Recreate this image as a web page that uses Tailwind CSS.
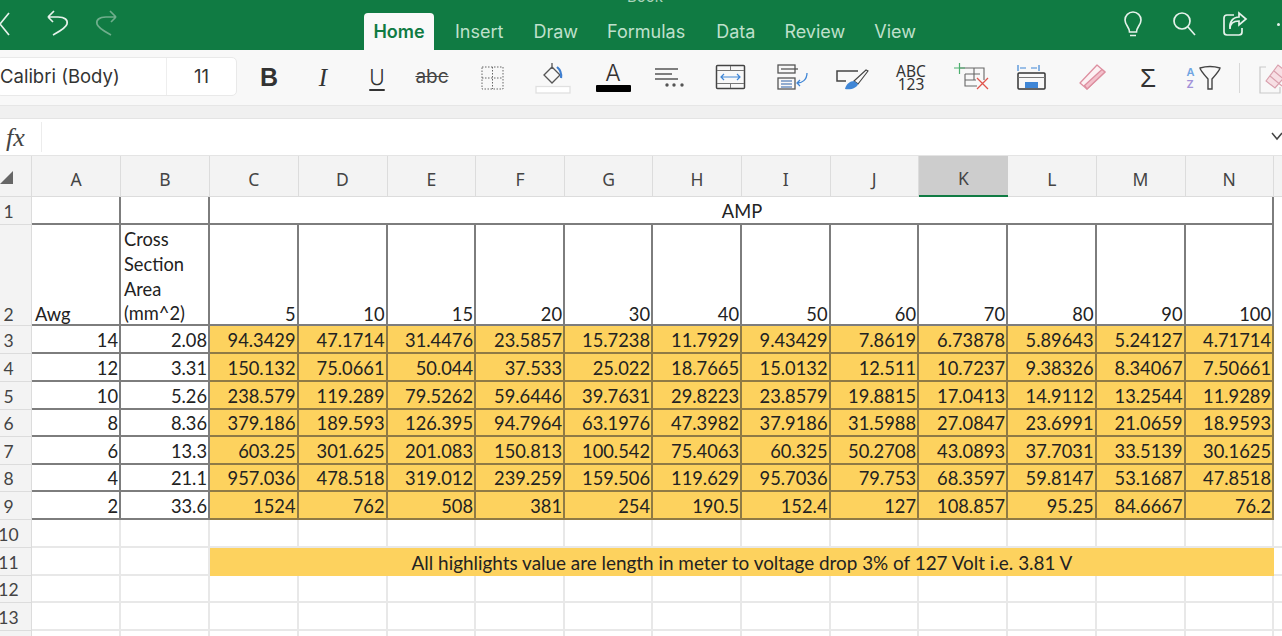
<!DOCTYPE html>
<html lang="en">
<head>
<meta charset="UTF-8">
<title>Book</title>
<script src="https://cdn.jsdelivr.net/npm/@tailwindcss/browser@4"></script>
</head>
<body class="w-[1282px] h-[636px] overflow-hidden bg-white font-['Inter',sans-serif]">

<!-- title bar + tabs -->
<div class="relative h-[50px] bg-[#107b43] flex items-end overflow-hidden">
  <span class="absolute left-[627px] top-[-14px] text-[15px] text-[#a9d3bb]">Book</span>
  <div class="absolute left-0 top-[10px] flex items-start">
    <svg class="ml-[-3px] w-[14px] h-[26px]" viewBox="0 0 14 26" fill="none" stroke="#e6f2eb" stroke-width="1.7"><path d="M12 3 L3 14 L12 25"/></svg>
    <svg class="ml-[35px] w-[23px] h-[26px]" viewBox="0 0 23 26" fill="none" stroke="#e6f2eb" stroke-width="1.7"><path d="M2 7 L7 12 M2 7 L8 1 M2 7 H12 C19 7 22 10 21 14 C20 18 14 21 7 25"/></svg>
    <svg class="ml-[26px] w-[23px] h-[26px]" viewBox="0 0 23 26" fill="none" stroke="#6fae8c" stroke-width="1.7"><path d="M21 7 L16 12 M21 7 L15 1 M21 7 H11 C4 7 1 10 2 14 C3 18 9 21 16 25"/></svg>
  </div>
  <div class="flex items-end ml-[364px] h-full text-[18px] text-[#bfe0cc]">
    <div class="w-[70px] h-[37px] rounded-t-[4px] bg-[#f9f9f9] text-[#107b43] font-semibold flex items-center justify-center">Home</div>
    <div class="h-[37px] flex items-center ml-[21px]">Insert</div>
    <div class="h-[37px] flex items-center ml-[30px]">Draw</div>
    <div class="h-[37px] flex items-center ml-[29px]">Formulas</div>
    <div class="h-[37px] flex items-center ml-[31px]">Data</div>
    <div class="h-[37px] flex items-center ml-[29px]">Review</div>
    <div class="h-[37px] flex items-center ml-[29px]">View</div>
  </div>
  <div class="absolute left-[1120px] top-[10px] flex items-center">
    <svg class="ml-[2px] w-[22px] h-[28px]" viewBox="0 0 22 28" fill="none" stroke="#e6f2eb" stroke-width="1.6"><path d="M7.5 22 C7.5 17 3 15 3 10 A8 8 0 0 1 19 10 C19 15 14.5 17 14.5 22 Z M8 25.5 H14"/></svg>
    <svg class="ml-[27px] w-[26px] h-[26px]" viewBox="0 0 26 26" fill="none" stroke="#e6f2eb" stroke-width="1.7"><circle cx="11" cy="10" r="8"/><path d="M17 16 L24 24"/></svg>
    <svg class="ml-[25px] w-[26px] h-[26px]" viewBox="0 0 26 26" fill="none" stroke="#e6f2eb" stroke-width="1.7"><path d="M12 4 H5 Q2 4 2 7 V21 Q2 24 5 24 H17 Q20 24 20 21 V17"/><path d="M8 18 C8 12 12 10 17 10 V14 L24 8 L17 2 V6 C11 6 7 11 8 18 Z"/></svg>
    <span class="ml-[29px] w-[3px] h-[3px] rounded-full bg-[#e6f2eb]"></span>
  </div>
</div>

<!-- ribbon -->
<div class="h-[56px] bg-[#f8f8f8] border-b border-[#e6e6e6] flex items-center overflow-hidden text-[#333] [&>*]:shrink-0">
  <div class="ml-[-4px] mt-[-2px] w-[241px] h-[39px] rounded-[5px] bg-white border border-[#e9e9e9] flex items-center text-[18.5px]">
    <span class="w-[170px] pl-[3px] border-r border-[#eeeeee] h-full flex items-center">Calibri (Body)</span>
    <span class="flex-1 text-center">11</span>
  </div>
  <div class="ml-[12px] w-10 text-center font-['Liberation_Sans',sans-serif] font-bold text-[25px]">B</div>
  <div class="ml-[14px] w-10 text-center font-['Liberation_Serif',serif] italic text-[25px]">I</div>
  <div class="ml-[14px] w-10 text-center text-[21px] font-light underline underline-offset-4">U</div>
  <div class="ml-[15px] w-10 text-center text-[19px] line-through text-[#444]">abc</div>
  <svg class="ml-[19px] w-10 h-[36px]" viewBox="0 0 40 36" fill="none" stroke="#666" stroke-width="1" stroke-dasharray="1.5 1.5"><rect x="11" y="7" width="21" height="22"/><path d="M21.5 7 V29 M11 18 H32"/></svg>
  <svg class="ml-[20px] w-10 h-[36px]" viewBox="0 0 40 36" fill="none" stroke-width="1.3"><path d="M21 3 V9 M13 15 L21 7 L29 15 L21 23 Z" stroke="#555"/><path d="M26 7 Q31 11 30 18" stroke="#3f7fd0" stroke-width="2.2"/><rect x="5" y="26.5" width="34" height="6.5" fill="#fff" stroke="#e0e0e0"/></svg>
  <div class="ml-[22px] mt-[-2px] w-10 flex flex-col items-center text-[23px] leading-[24px] font-light">A<span class="w-[35px] h-[7px] rounded-[1px] bg-black"></span></div>
  <svg class="ml-[15px] w-10 h-[36px]" viewBox="0 0 40 36" fill="none" stroke="#555" stroke-width="1.5"><path d="M7 9 H30 M7 14 H24 M7 19 H30"/><circle cx="19" cy="25" r="1.7" fill="#555" stroke="none"/><circle cx="26" cy="25" r="1.7" fill="#555" stroke="none"/><circle cx="34" cy="25" r="1.7" fill="#555" stroke="none"/></svg>
  <svg class="ml-[22px] w-10 h-[36px]" viewBox="0 0 40 36" fill="none"><rect x="6.5" y="5.5" width="28" height="23" rx="1" stroke="#444" stroke-width="1.5"/><path d="M7 10.5 H34 M7 23.5 H34 M20.5 6 V10 M20.5 24 V28" stroke="#777"/><path d="M11 17 H30 M14 14 L11 17 L14 20 M27 14 L30 17 L27 20" stroke="#3f86d6" stroke-width="1.2"/></svg>
  <svg class="ml-[20px] w-10 h-[36px]" viewBox="0 0 40 36" fill="none" stroke="#555" stroke-width="1.3"><rect x="8" y="5" width="17" height="8"/><path d="M11 9 H28"/><rect x="8" y="18" width="17" height="11"/><path d="M11 21 H22 M11 24 H22 M11 27 H22" stroke="#6f93c2"/><path d="M37 13 C37 20 32 23 27 23 M30 20 L27 23 L30 26" stroke="#3f86d6"/></svg>
  <svg class="ml-[21px] w-10 h-[36px]" viewBox="0 0 40 36" fill="none"><path d="M27 11 H6 V21 H15" stroke="#444" stroke-width="1.5"/><path d="M23 21 L35 10 L37 11 L27 24 Z" stroke="#444" stroke-width="1.1"/><path d="M14 29 C15 24 19 21 23 21 L27 24 C26 28 20 30 14 29 Z" fill="#3f86d6"/></svg>
  <div class="ml-[20px] w-10 text-center font-['Noto_Sans',sans-serif] text-[15.5px] leading-[13px] text-[#333]">ABC<br>123</div>
  <svg class="ml-[19px] w-10 h-[36px]" viewBox="0 0 40 36" fill="none"><path d="M10 8 H34 V20 M15 14 V26 H27 M15 14 H30 M15 20 H26 M24 8 V20" stroke="#666" stroke-width="1.1"/><path d="M9.5 3 V14 M4 8 H15" stroke="#4caf6e" stroke-width="1.2"/><path d="M27 18 L38 29 M38 18 L27 29" stroke="#e0544c" stroke-width="1.3"/></svg>
  <svg class="ml-[21px] w-10 h-[36px]" viewBox="0 0 40 36" fill="none"><path d="M7 5 V11 M28 5 V11 M9 8 H15 M20 8 H26" stroke="#3f86d6" stroke-width="1.2"/><rect x="7" y="13" width="27" height="16" rx="1" stroke="#333" stroke-width="1.5"/><path d="M7 17.5 H34" stroke="#777"/><rect x="14" y="22" width="13" height="6" fill="#3f86d6"/></svg>
  <svg class="ml-[21px] w-10 h-[36px]" viewBox="0 0 40 36" fill="none" stroke="#dd8fa0" stroke-width="1.3" stroke-linejoin="round"><path d="M25 5 L33 12 L15 29 L8 23 Z" fill="#fcf1f3"/><path d="M33 12 L15 29 L12.5 25.5 L30 9.5 Z" fill="#f3c0cb"/></svg>
  <div class="ml-[16px] w-10 text-center text-[26px] leading-none text-[#333] font-['Liberation_Sans',sans-serif]">Σ</div>
  <div class="ml-[16px] w-10 flex items-center justify-center">
    <div class="flex flex-col text-[11px] leading-[12px] font-semibold"><span class="text-[#6fa4e2]">A</span><span class="text-[#a392d8]">Z</span></div>
    <svg class="ml-[3px] w-[24px] h-[26px]" viewBox="0 0 24 26" fill="none" stroke="#444" stroke-width="1.4"><path d="M2 3 Q12 0 22 3 Q22 5 14 14 V24 H10 V14 Q2 5 2 3 Z"/></svg>
  </div>
  <span class="ml-[15px] w-px h-[30px] bg-[#d8d8d8]"></span>
  <svg class="ml-[18px] w-[30px] h-[34px]" viewBox="0 0 30 34" fill="none" stroke="#c9c9c9" stroke-width="1.2"><path d="M8 6 H2 V32 H22 V26"/><path d="M8 20 L20 4 L30 12 L17 27 Z" fill="#f7dfe4" stroke="#d9a0ad"/><path d="M12 15 L24 25 M16 10 L28 20" stroke="#d9a0ad"/></svg>
</div>

<!-- gap + formula bar -->
<div class="h-[12px] bg-[#f0f0f0]"></div>
<div class="h-[38px] bg-white border-y border-[#e4e4e4] flex items-center relative">
  <span class="w-[42px] pl-[6px] border-r border-[#ececec] h-[30px] flex items-center font-['Liberation_Serif',serif] italic text-[26px] text-[#444]">fx</span>
  <svg class="absolute right-[-3px] top-[10px] w-[14px] h-[14px]" viewBox="0 0 14 14" fill="none" stroke="#444" stroke-width="1.5"><path d="M1 4 L6 10 L11 4"/></svg>
</div>

<!-- sheet -->
<div id="sheet" class="grid font-['Lato',sans-serif] text-[18.3px] leading-none text-[#222] bg-white
  grid-cols-[32px_89px_89px_88.5px_89px_88.5px_89px_88px_89px_88.5px_88.5px_89px_88.5px_89px_88.5px_8px]
  grid-rows-[41px_28px_101px_28px_28px_28px_27px_28px_27px_28px_28px_28px_27px_28px_28px]"></div>

<script>
  var cols = ["A","B","C","D","E","F","G","H","I","J","K","L","M","N"];
  var rows = [
    ["14","2.08","94.3429","47.1714","31.4476","23.5857","15.7238","11.7929","9.43429","7.8619","6.73878","5.89643","5.24127","4.71714"],
    ["12","3.31","150.132","75.0661","50.044","37.533","25.022","18.7665","15.0132","12.511","10.7237","9.38326","8.34067","7.50661"],
    ["10","5.26","238.579","119.289","79.5262","59.6446","39.7631","29.8223","23.8579","19.8815","17.0413","14.9112","13.2544","11.9289"],
    ["8","8.36","379.186","189.593","126.395","94.7964","63.1976","47.3982","37.9186","31.5988","27.0847","23.6991","21.0659","18.9593"],
    ["6","13.3","603.25","301.625","201.083","150.813","100.542","75.4063","60.325","50.2708","43.0893","37.7031","33.5139","30.1625"],
    ["4","21.1","957.036","478.518","319.012","239.259","159.506","119.629","95.7036","79.753","68.3597","59.8147","53.1687","47.8518"],
    ["2","33.6","1524","762","508","381","254","190.5","152.4","127","108.857","95.25","84.6667","76.2"]
  ];
  var amps = ["5","10","15","20","30","40","50","60","70","80","90","100"];
  var sheet = document.getElementById("sheet");

  function cell(cls, text) {
    var d = document.createElement("div");
    d.className = cls;
    if (text) d.innerHTML = text;
    sheet.appendChild(d);
    return d;
  }
  var rowHead = "bg-[#f3f3f3] border-b border-r border-[#dcdcdc] text-[#444] text-[17.5px] flex justify-center pr-[14px] whitespace-nowrap";
  var dark = "border-r-2 border-b-2 border-[#7d7d7d] flex pl-[3px] pr-[1px] overflow-hidden whitespace-nowrap";
  var yellow = "border-r-2 border-b-2 border-[#8f7a45] flex pl-[3px] pr-[1px] overflow-hidden whitespace-nowrap bg-[#fdd25e]";
  var light = "border-r-2 border-b-2 border-[#e8e8e8]";
  var colHead = "flex items-center justify-center pt-[7px] text-[#444] font-['Noto_Sans',sans-serif] text-[17.5px]";

  // column headers
  cell("bg-[#f3f3f3] border-r border-b border-[#dcdcdc] flex items-center pt-[3px]", '<svg class="w-[13px] h-[13px]" viewBox="0 0 13 13"><path d="M13 0 V13 H0 Z" fill="#666"/></svg>');
  cols.forEach(function (c) {
    if (c == "K") cell(colHead + " bg-[#cdcdcd] border-b-2 border-[#107b43]", c);
    else cell(colHead + " bg-[#f3f3f3] border-r border-b border-[#dcdcdc]", c);
  });
  cell("bg-[#f3f3f3] border-b border-[#dcdcdc]");

  // row 1
  cell(rowHead + " items-center pt-[2px]", "1");
  cell(dark);
  cell(dark);
  cell(dark + " col-span-12 items-center justify-center pt-[2px]", "AMP");
  cell("");

  // row 2
  cell(rowHead + " items-end pb-[2px]", "2");
  cell(dark + " items-end pb-[1px]", "Awg");
  cell(dark + " items-start pt-[2px] whitespace-normal leading-[24.8px]", "Cross<br>Section<br>Area<br>(mm^2)");
  amps.forEach(function (a) { cell(dark + " items-end justify-end pb-[1px]", a); });
  cell("");

  // rows 3-9
  rows.forEach(function (r, i) {
    cell(rowHead + " items-center pt-[2px]", String(i + 3));
    r.forEach(function (v, j) {
      cell((j < 2 ? dark : yellow) + " items-center justify-end pt-[2px]", v);
    });
    cell("");
  });

  // rows 10-13 + a cut-off one
  for (var n = 10; n <= 14; n++) {
    cell(rowHead + " items-center pt-[2px]", n < 14 ? String(n) : "");
    if (n == 11) {
      cell(light);
      cell(light);
      cell("col-span-12 bg-[#fdd25e] flex items-center justify-center pt-[2px] text-[18.9px] whitespace-nowrap", "All highlights value are length in meter to voltage drop 3% of 127 Volt i.e. 3.81 V");
    } else {
      for (var k = 0; k < 14; k++) cell(light);
    }
    cell("border-b-2 border-[#e8e8e8]");
  }
</script>
</body>
</html>
